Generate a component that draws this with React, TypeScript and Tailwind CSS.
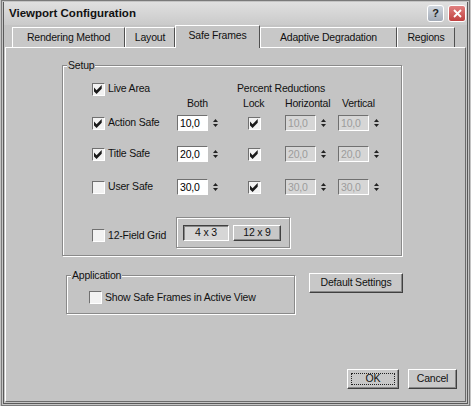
import type { ReactNode } from 'react';

const sunken = 'border border-t-[#707070] border-l-[#707070] border-r-white border-b-white';
const raised =
  'border border-t-white border-l-white border-r-[#404040] border-b-[#404040] shadow-[inset_-1px_-1px_0_#888]';
const etched = 'border border-[#8a8a8a] shadow-[1px_1px_0_#fff,inset_1px_1px_0_#fff]';

function Check({ checked }: { checked?: boolean }) {
  return (
    <span className={`w-[13px] h-[13px] shrink-0 flex items-center justify-center bg-[#f2f2f2] ${sunken}`}>
      {checked && (
        <svg width="9" height="9" viewBox="0 0 7 7">
          <path d="M0 2 L2 4 L6 0 V3 L2 7 L0 5 Z" fill="#1a1a1a" />
        </svg>
      )}
    </span>
  );
}

function Arrows() {
  return (
    <div className="w-[10px] h-[16px] flex flex-col items-center justify-center gap-[2px]">
      <svg width="5" height="3" viewBox="0 0 5 3">
        <path d="M2.5 0 L5 3 H0 Z" fill="#222" />
      </svg>
      <svg width="5" height="3" viewBox="0 0 5 3">
        <path d="M0 0 H5 L2.5 3 Z" fill="#222" />
      </svg>
    </div>
  );
}

function Spin({ value, disabled }: { value: string; disabled?: boolean }) {
  return (
    <div className="flex items-center gap-[2px]">
      <div
        className={`w-[31px] h-[16px] pl-[2px] leading-[14px] ${sunken} ${
          disabled ? 'bg-[#d6d6d6] text-[#9c9c9c]' : 'bg-white text-black'
        }`}
      >
        {value}
      </div>
      <Arrows />
    </div>
  );
}

function Group({ label, className, children }: { label: string; className: string; children: ReactNode }) {
  return (
    <div className={`relative ${etched} ${className}`}>
      <span className="absolute -top-[8px] left-[4px] px-[1px] bg-[#c4c4c4] leading-[14px]">{label}</span>
      {children}
    </div>
  );
}

function Tab({ label, w, active }: { label: string; w: string; active?: boolean }) {
  if (active) {
    return (
      <div
        className={`${w} h-[23px] -mb-[1px] relative z-10 bg-[#c4c4c4] border-t border-l border-t-white border-l-white border-r border-r-[#505050] flex items-center justify-center pb-[2px]`}
      >
        {label}
      </div>
    );
  }
  return (
    <div
      className={`${w} h-[20px] bg-[#c8c8c8] border-t border-l border-t-white border-l-white border-r border-r-[#505050] flex items-center justify-center`}
    >
      {label}
    </div>
  );
}

function Row({ className, children }: { className: string; children: ReactNode }) {
  return <div className={`flex items-center ${className}`}>{children}</div>;
}

export default function App() {
  return (
    <div className="w-[471px] h-[406px] bg-[#c4c4c4] overflow-hidden font-['Liberation_Sans',Arial,sans-serif] text-[10.5px] tracking-[-0.2px] text-[#111]">
      <div className="mx-[1px] h-[406px] border border-[#7a7a7a] p-[1px]">
        <div className="h-full border-l border-r border-b border-[#5a5a5a] flex flex-col">
          {/* title bar */}
          <div className="h-[23px] shrink-0 flex items-center justify-between pl-[5px] pr-[1px] bg-gradient-to-b from-[#e0e0e0] to-[#cacaca]">
            <span className="text-[11.5px] font-bold tracking-[0px]">Viewport Configuration</span>
            <div className="flex items-center gap-[4px]">
              <div className="w-[17px] h-[17px] rounded-[3px] border border-white bg-gradient-to-b from-[#d0d6de] to-[#a4acb8] flex items-center justify-center text-[11px] font-bold text-[#222]">
                ?
              </div>
              <div className="w-[18px] h-[17px] rounded-[3px] border border-white bg-gradient-to-b from-[#e08080] to-[#c04040] flex items-center justify-center">
                <svg width="9" height="9" viewBox="0 0 9 9">
                  <path d="M1 1 L8 8 M8 1 L1 8" stroke="#fff" strokeWidth="1.8" />
                </svg>
              </div>
            </div>
          </div>

          {/* tabs */}
          <div className="h-[22px] shrink-0 flex items-end pl-[8px] pt-[1px]">
            <Tab label="Rendering Method" w="w-[113px]" />
            <Tab label="Layout" w="w-[50px]" />
            <Tab label="Safe Frames" w="w-[85px]" active />
            <Tab label="Adaptive Degradation" w="w-[137px]" />
            <Tab label="Regions" w="w-[58px]" />
          </div>

          {/* panel */}
          <div className="flex-1 ml-[1px] mr-[1px] mb-[1px] border border-t-white border-l-white border-r-[#6a6a6a] border-b-[#6a6a6a] flex flex-col">
            <Group label="Setup" className="ml-[56px] mt-[17px] w-[340px] h-[191px] shrink-0">
              <div className="pl-[29px] pt-[16px] flex flex-col">
                <Row className="h-[14px]">
                  <div className="w-[145px] flex items-center gap-[3px]">
                    <Check checked />
                    <span>Live Area</span>
                  </div>
                  <span>Percent Reductions</span>
                </Row>
                <Row className="h-[14px] mt-[1px]">
                  <div className="w-[84px]" />
                  <div className="w-[64px] pl-[11px]">Both</div>
                  <div className="w-[45px] pl-[3px]">Lock</div>
                  <div className="w-[53px]">Horizontal</div>
                  <div className="pl-[4px]">Vertical</div>
                </Row>
                <Row className="h-[16px] mt-[4px]">
                  <div className="w-[84px] flex items-center gap-[3px]">
                    <Check checked />
                    <span>Action Safe</span>
                  </div>
                  <div className="w-[64px] pl-[1px]">
                    <Spin value="10,0" />
                  </div>
                  <div className="w-[45px] pl-[8px]">
                    <Check checked />
                  </div>
                  <div className="w-[53px]">
                    <Spin value="10,0" disabled />
                  </div>
                  <Spin value="10,0" disabled />
                </Row>
                <Row className="h-[16px] mt-[15px]">
                  <div className="w-[84px] flex items-center gap-[3px]">
                    <Check checked />
                    <span>Title Safe</span>
                  </div>
                  <div className="w-[64px] pl-[1px]">
                    <Spin value="20,0" />
                  </div>
                  <div className="w-[45px] pl-[8px]">
                    <Check checked />
                  </div>
                  <div className="w-[53px]">
                    <Spin value="20,0" disabled />
                  </div>
                  <Spin value="20,0" disabled />
                </Row>
                <Row className="h-[16px] mt-[17px]">
                  <div className="w-[84px] flex items-center gap-[3px]">
                    <Check />
                    <span>User Safe</span>
                  </div>
                  <div className="w-[64px] pl-[1px]">
                    <Spin value="30,0" />
                  </div>
                  <div className="w-[45px] pl-[8px]">
                    <Check checked />
                  </div>
                  <div className="w-[53px]">
                    <Spin value="30,0" disabled />
                  </div>
                  <Spin value="30,0" disabled />
                </Row>
                <Row className="h-[31px] mt-[22px]">
                  <div className="w-[84px] flex items-center gap-[3px] pt-[6px]">
                    <Check />
                    <span>12-Field Grid</span>
                  </div>
                  <div className={`w-[114px] h-[31px] flex items-center gap-[4px] px-[6px] ${etched}`}>
                    <div className="w-[46px] h-[16px] flex items-center justify-center bg-[#d6d6d6] border border-t-[#404040] border-l-[#404040] border-r-white border-b-white shadow-[inset_1px_1px_0_#888]">
                      4 x 3
                    </div>
                    <div className={`w-[48px] h-[16px] flex items-center justify-center bg-[#c8c8c8] ${raised}`}>
                      12 x 9
                    </div>
                  </div>
                </Row>
              </div>
            </Group>

            <div className="mt-[17px] flex items-start">
              <Group label="Application" className="ml-[60px] mt-[2px] w-[229px] h-[39px] shrink-0">
                <div className="pl-[22px] pt-[14px] flex items-center gap-[3px]">
                  <Check />
                  <span>Show Safe Frames in Active View</span>
                </div>
              </Group>
              <div className={`ml-[14px] w-[94px] h-[20px] flex items-center justify-center bg-[#c8c8c8] ${raised}`}>
                Default Settings
              </div>
            </div>

            <div className="mt-auto flex justify-end gap-[9px] pr-[8px] pb-[12px]">
              <div className={`w-[52px] h-[20px] p-[3px] bg-[#c8c8c8] ${raised}`}>
                <div className="w-full h-full border border-dotted border-[#222] flex items-center justify-center">OK</div>
              </div>
              <div className={`w-[49px] h-[20px] flex items-center justify-center bg-[#c8c8c8] ${raised}`}>Cancel</div>
            </div>
          </div>
        </div>
      </div>
    </div>
  );
}
